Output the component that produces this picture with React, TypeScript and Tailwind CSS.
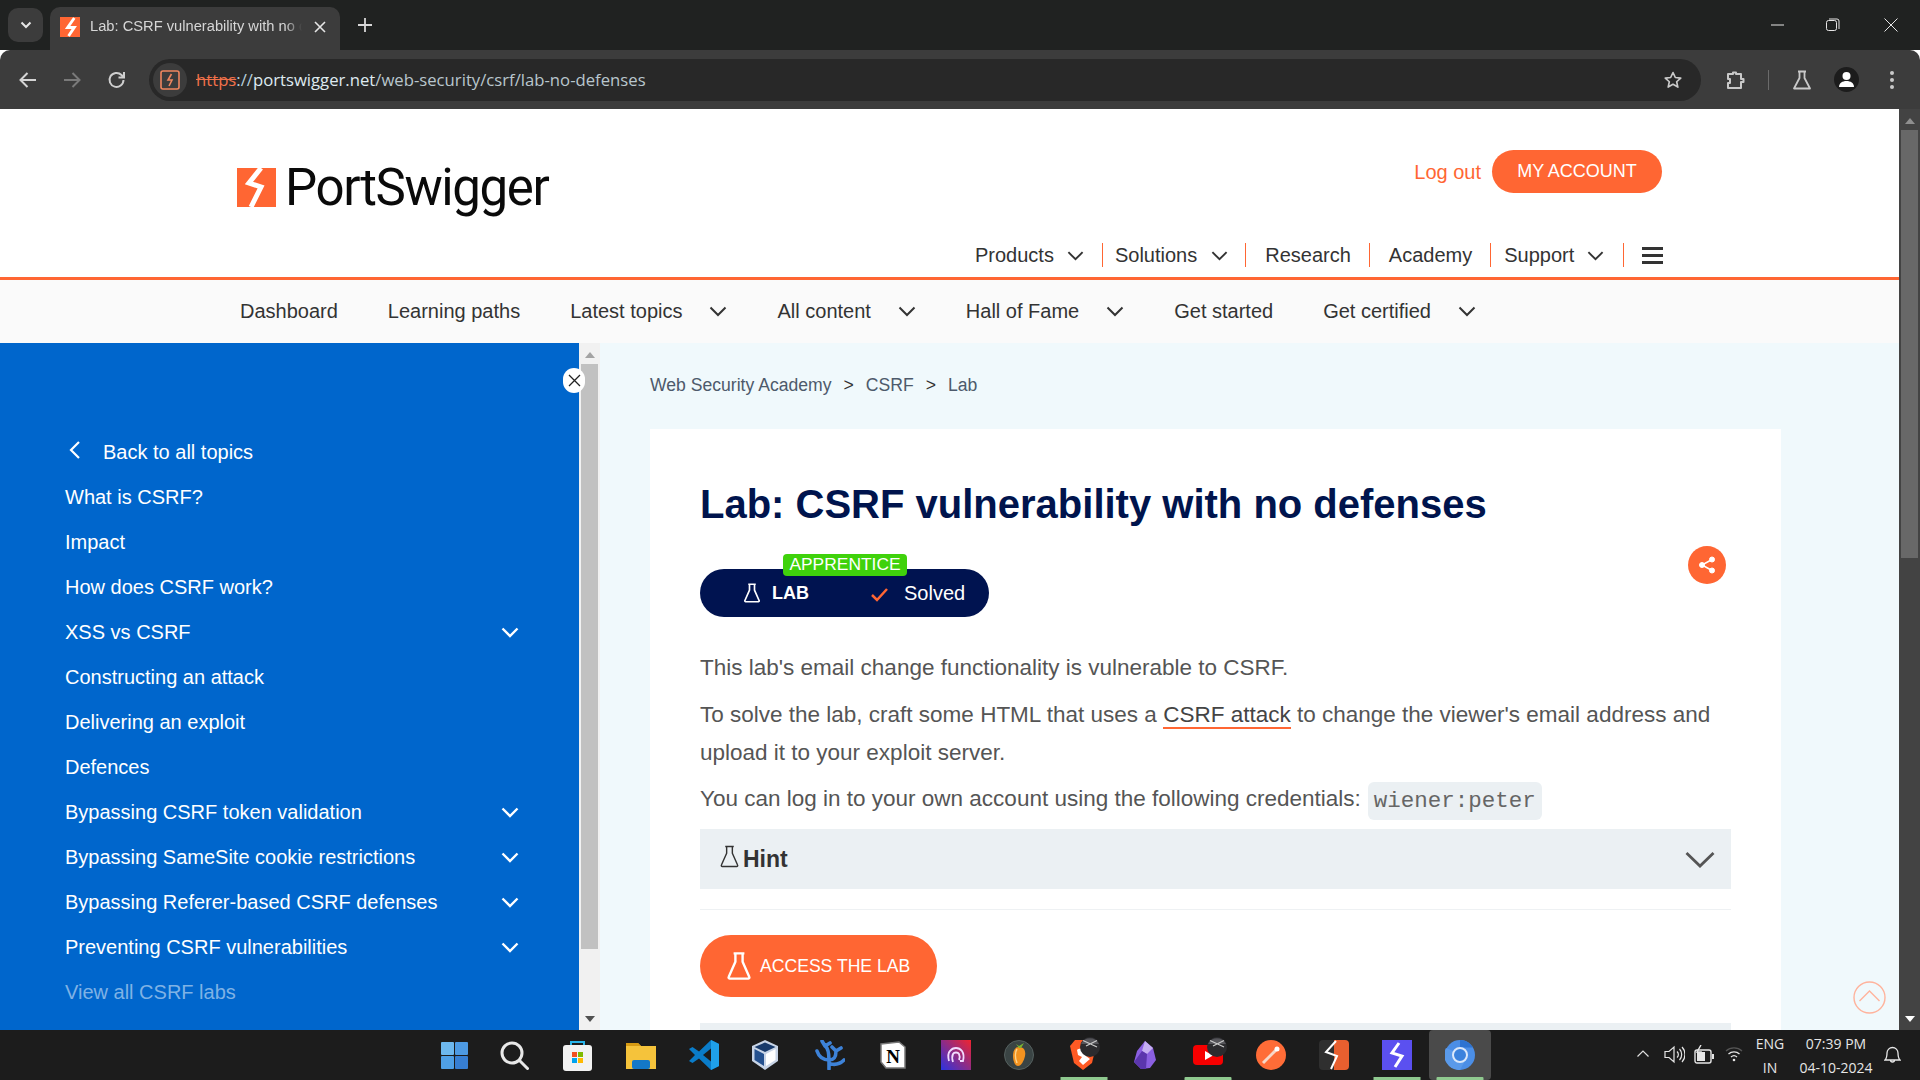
import React from "react";

const Chev = ({ c = "#333", s = 18, w = 2 }: { c?: string; s?: number; w?: number }) => (
  <svg width={s} height={s} viewBox="0 0 18 18" fill="none" stroke={c} strokeWidth={w}>
    <path d="M1.5 5.5 9 13l7.500-7.500" />
  </svg>
);

const Flask = ({ c = "#fff", w = 20, h = 24, sw = 2 }: { c?: string; w?: number; h?: number; sw?: number }) => (
  <svg width={w} height={h} viewBox="0 0 20 24" fill="none" stroke={c} strokeWidth={sw} strokeLinejoin="round">
    <path d="M5.500 1.500h9M7 1.500v7L1.500 21a1 1 0 0 0 1 1.500h15a1 1 0 0 0 1-1.500L13 8.500v-7" />
  </svg>
);

const Bolt = ({ c = "#fff" }: { c?: string }) => (
  <path d="M15 1 8 11h7l-6 9" fill="none" stroke={c} strokeWidth="3" />
);

const Sep = () => <span className="block w-px h-6 bg-[#ff6633]" />;

const NavItem = ({ label, chev, x }: { label: string; chev?: boolean; x: string }) => (
  <div className={`flex items-center ${x}`}>
    <span>{label}</span>
    {chev && <span className="ml-[27px]"><Chev s={18} w={2} /></span>}
  </div>
);

const topics: [string, boolean][] = [
  ["What is CSRF?", false],
  ["Impact", false],
  ["How does CSRF work?", false],
  ["XSS vs CSRF", true],
  ["Constructing an attack", false],
  ["Delivering an exploit", false],
  ["Defences", false],
  ["Bypassing CSRF token validation", true],
  ["Bypassing SameSite cookie restrictions", true],
  ["Bypassing Referer-based CSRF defenses", true],
  ["Preventing CSRF vulnerabilities", true],
];

const UI = '"Liberation Sans", Arial, sans-serif';

const Tab = () => (
  <div className="relative w-[290px] h-[43px] bg-[#3c3c3c] rounded-t-[10px] flex items-center pl-[10px] pb-[4px] ml-[7px] mt-[7px]">
    <svg width="20" height="20" viewBox="0 0 21 21" className="shrink-0">
      <rect width="21" height="21" fill="#ff6633" />
      <Bolt />
    </svg>
    <span className="ml-[10px] text-[14.700px] text-[#d6d6d6] w-[212px] overflow-hidden whitespace-nowrap" style={{ maskImage: "linear-gradient(to right,#000 92%,transparent)" }}>
      Lab: CSRF vulnerability with no defenses
    </span>
    <svg width="12" height="12" viewBox="0 0 12 12" stroke="#e5e5e5" strokeWidth="1.600" className="ml-[12px]">
      <path d="M1 1l10 10M11 1 1 11" />
    </svg>
  </div>
);

const Chrome = () => (
  <div className="shrink-0">
    <div className="h-[50px] bg-[#202221] flex items-start">
      <div className="w-[35px] h-[34px] mt-[8px] ml-[8px] rounded-[10px] bg-[#3c3c3c] flex items-center justify-center">
        <svg width="12" height="8" viewBox="0 0 12 8" fill="none" stroke="#e6e6e6" strokeWidth="2"><path d="M1.500 1.500 6 6l4.500-4.500" /></svg>
      </div>
      <Tab />
      <svg width="14" height="14" viewBox="0 0 14 14" stroke="#d8d8d8" strokeWidth="1.800" className="ml-[18px] mt-[18px]"><path d="M7 0v14M0 7h14" /></svg>
      <div className="flex-1" />
      <svg width="14" height="14" viewBox="0 0 14 14" stroke="#e6e6e6" strokeWidth="1" className="mt-[18px] mr-[41px]"><path d="M0 7h13" /></svg>
      <svg width="14" height="14" viewBox="0 0 14 14" fill="none" stroke="#e6e6e6" strokeWidth="1" className="mt-[18px] mr-[44px]">
        <rect x="0.500" y="2.500" width="10" height="10" rx="2" /><path d="M3 1h8a2 2 0 0 1 2 2v8" />
      </svg>
      <svg width="14" height="14" viewBox="0 0 14 14" stroke="#e6e6e6" strokeWidth="1" className="mt-[18px] mr-[22px]"><path d="M.5.500l13 13M13.500.500l-13 13" /></svg>
    </div>
    <div className="h-[59px] bg-[#3c3c3c] rounded-t-[10px] flex items-center">
      <svg width="20" height="18" viewBox="0 0 20 18" fill="none" stroke="#d4d4d4" strokeWidth="2" className="ml-[18px]"><path d="M18 9H3M9.500 2 2.500 9l7 7" /></svg>
      <svg width="20" height="18" viewBox="0 0 20 18" fill="none" stroke="#7a7a7a" strokeWidth="2" className="ml-[24px]"><path d="M2 9h15M10.500 2l7 7-7 7" /></svg>
      <svg width="20" height="20" viewBox="0 0 20 20" fill="none" stroke="#cfcfcf" strokeWidth="2" className="ml-[25px]"><path d="M16.500 10a7 7 0 1 1-2-5L17 7.500M17 2v5.500h-5.500" /></svg>
      <div className="ml-[22px] w-[1552px] h-[42px] rounded-full bg-[#282828] flex items-center relative">
        <div className="w-[34px] h-[34px] ml-[4px] rounded-full bg-[#3c3c3c] flex items-center justify-center">
          <svg width="20" height="20" viewBox="0 0 20 20" fill="none">
            <rect x="1" y="1" width="18" height="18" rx="2" stroke="#f0865f" strokeWidth="1.600" />
            <path d="M11.500 4 8 10h4l-3 6" stroke="#f0865f" strokeWidth="1.600" />
          </svg>
        </div>
        <span className="ml-[9px] mt-[1px] text-[16.700px]" style={{ fontFamily: '"Open Sans","Noto Sans",sans-serif' }}>
          <span className="text-[#f0714a] line-through">https</span>
          <span className="text-[#b9d0dc]">://</span>
          <span className="text-[#dfeaf0]">portswigger.net</span>
          <span className="text-[#b9c6cd]">/web-security/csrf/lab-no-defenses</span>
        </span>
        <svg width="20" height="20" viewBox="0 0 24 24" fill="none" stroke="#c9c9c9" strokeWidth="2" strokeLinejoin="round" className="absolute right-[18px] top-[11px]">
          <path d="m12 3 2.800 6 6.500.700-4.900 4.400 1.400 6.400L12 17.200l-5.800 3.300 1.400-6.400L2.700 9.700 9.200 9z" />
        </svg>
      </div>
      <svg width="20" height="20" viewBox="0 0 20 20" fill="none" stroke="#c9c9c9" strokeWidth="2" strokeLinejoin="round" className="ml-[25px]">
        <path d="M2 4h5V2.500h3V4h5v5h2.500v3H15v6H2v-5h2V9H2z" />
      </svg>
      <span className="w-px h-[20px] bg-[#6b6b6b] ml-[22px]" />
      <svg width="20" height="20" viewBox="0 0 20 20" fill="none" stroke="#c9c9c9" strokeWidth="1.800" strokeLinejoin="round" className="ml-[23px]">
        <path d="M6 1.500h8M7.500 1.500V8L2 18.500h16L12.500 8V1.500" />
      </svg>
      <div className="ml-[22px] w-[25px] h-[25px] rounded-full bg-[#1c1c1c] flex items-center justify-center">
        <svg width="17" height="17" viewBox="0 0 17 17" fill="#fff"><circle cx="8.500" cy="5" r="4" /><path d="M1 16c0-4 3.500-6 7.500-6s7.500 2 7.500 6z" /></svg>
      </div>
      <svg width="6" height="20" viewBox="0 0 6 20" fill="#c9c9c9" className="ml-[30px]"><circle cx="3" cy="3" r="2" /><circle cx="3" cy="10" r="2" /><circle cx="3" cy="17" r="2" /></svg>
    </div>
  </div>
);

const Header = () => (
  <div className="h-[171px] bg-white border-b-[3px] border-[#ff6633] shrink-0 flex flex-col relative">
    <div className="flex justify-between pl-[237px] pr-[237px] pt-[38px] h-[134px]">
      <div className="flex items-center h-[60px] mt-[9px]">
        <svg width="39" height="39" viewBox="0 0 39 39" className="mt-[3px]">
          <rect width="39" height="39" fill="#ff6633" />
          <path d="M24 0 12 15l12 4-10 20" fill="none" stroke="#fff" strokeWidth="5" />
        </svg>
        <span className="ml-[9px] mt-[3px] text-[51px] tracking-[-1.400px] text-[#0a0a0a] leading-none" style={{ fontFamily: 'Roboto,sans-serif' }}>PortSwigger</span>
      </div>
      <div className="flex items-start mt-[3px]">
        <span className="text-[20px] text-[#ff6633] mt-[7px]">Log out</span>
        <span className="ml-[11px] w-[170px] h-[43px] rounded-full bg-[#ff6633] text-white text-[18px] flex items-center justify-center">MY ACCOUNT</span>
      </div>
    </div>
    <div className="flex items-center h-[24px] pl-[975px] text-[20px] text-[#333] whitespace-nowrap">
      <span>Products</span>
      <span className="ml-[13px]"><Chev s={17} /></span>
      <span className="ml-[18px]"><Sep /></span>
      <span className="ml-[12px]">Solutions</span>
      <span className="ml-[14px]"><Chev s={17} /></span>
      <span className="ml-[17px]"><Sep /></span>
      <span className="ml-[19px]">Research</span>
      <span className="ml-[18px]"><Sep /></span>
      <span className="ml-[19px]">Academy</span>
      <span className="ml-[18px]"><Sep /></span>
      <span className="ml-[13px]">Support</span>
      <span className="ml-[13px]"><Chev s={17} /></span>
      <span className="ml-[19px]"><Sep /></span>
      <span className="ml-[18px] flex flex-col gap-[4px] w-[21px]">
        <span className="h-[3px] bg-[#333]" /><span className="h-[3px] bg-[#333]" /><span className="h-[3px] bg-[#333]" />
      </span>
    </div>
  </div>
);

const SubNav = () => (
  <div className="h-[63px] bg-[#fafafa] shrink-0 flex items-center pl-[240px] pb-[2px] text-[20px] text-[#333] whitespace-nowrap">
    <NavItem label="Dashboard" x="" />
    <NavItem label="Learning paths" x="ml-[50px]" />
    <NavItem label="Latest topics" chev x="ml-[50px]" />
    <NavItem label="All content" chev x="ml-[50px]" />
    <NavItem label="Hall of Fame" chev x="ml-[50px]" />
    <NavItem label="Get started" x="ml-[50px]" />
    <NavItem label="Get certified" chev x="ml-[50px]" />
  </div>
);

const Sidebar = () => (
  <div className="w-[600px] shrink-0 flex relative">
    <div className="w-[579px] bg-[#0066cc] text-white text-[20px] pt-[86px] pl-[65px] pr-[60px]">
      <div className="flex items-center h-[45px]">
        <svg width="14" height="20" viewBox="0 0 14 20" fill="none" stroke="#fff" strokeWidth="2.200" className="ml-[3px] -mt-[4px]"><path d="M11 2 3 10l8 8" /></svg>
        <span className="ml-[21px]">Back to all topics</span>
      </div>
      {topics.map(([t, c]) => (
        <div key={t} className="flex items-center justify-between h-[45px]">
          <span>{t}</span>
          {c && <Chev c="#fff" s={18} w={2.400} />}
        </div>
      ))}
      <div className="h-[45px] flex items-center text-[#7fb2e5]">View all CSRF labs</div>
    </div>
    <div className="w-[21px] bg-[#f1f1f1] flex flex-col items-center">
      <svg width="10" height="6" viewBox="0 0 10 6" fill="#a3a3a3" className="mt-[9px]"><path d="M5 0l5 6H0z" /></svg>
      <div className="w-[17px] h-[585px] bg-[#c1c1c1] mt-[6px]" />
      <div className="flex-1" />
      <svg width="10" height="6" viewBox="0 0 10 6" fill="#505050" className="mb-[8px]"><path d="M5 6 10 0H0z" /></svg>
    </div>
    <div className="absolute left-[563px] top-[25px] w-[22px] h-[25px] rounded-full bg-white flex items-center justify-center">
      <svg width="13" height="13" viewBox="0 0 13 13" stroke="#222" strokeWidth="1.300"><path d="M1 1l11 11M12 1 1 12" /></svg>
    </div>
  </div>
);

const Main = () => (
  <div className="flex-1 bg-[#f0f9fc] relative overflow-hidden pl-[50px]">
    <div className="text-[17.600px] text-[#4d5a6b] h-[86px] pt-[30px] leading-[24px] whitespace-nowrap">
      Web Security Academy
      <span className="mx-[12px] text-[#333]">&gt;</span>CSRF
      <span className="mx-[12px] text-[#333]">&gt;</span>Lab
    </div>
    <div className="w-[1131px] h-[700px] bg-white px-[50px]">
      <h1 className="text-[40px] font-bold text-[#00144d] pt-[50px] leading-[50px] whitespace-nowrap">Lab: CSRF vulnerability with no defenses</h1>
      <div className="relative h-[48px] w-[289px] mt-[40px] rounded-full bg-[#001350] text-white flex items-center">
        <div className="absolute left-[83px] -top-[15px] w-[124px] h-[22px] rounded-[4px] bg-[#3fd20b] text-[17.400px] flex items-center justify-center leading-none">APPRENTICE</div>
        <span className="ml-[43px]"><Flask w={18} h={20} /></span>
        <span className="ml-[11px] font-bold text-[18px]">LAB</span>
        <svg width="18" height="14" viewBox="0 0 18 14" fill="none" stroke="#ff6633" strokeWidth="2.500" className="ml-[62px] mt-[3px]"><path d="M1 7l5 5 10-11" /></svg>
        <span className="ml-[15px] text-[20px] -mt-[1px]">Solved</span>
      </div>
      <div className="absolute left-[1088px] top-[203px] w-[38px] h-[38px] rounded-full bg-[#ff6633] flex items-center justify-center">
        <svg width="18" height="18" viewBox="0 0 18 18" fill="#fff" stroke="#fff"><circle cx="14" cy="3.500" r="2.500" /><circle cx="14" cy="14.500" r="2.500" /><circle cx="4" cy="9" r="2.500" /><path d="M14 3.500 4 9l10 5.500" fill="none" strokeWidth="1.500" /></svg>
      </div>
      <div className="text-[22.500px] text-[#555] leading-[38px]">
        <p className="mt-[32px]">This lab's email change functionality is vulnerable to CSRF.</p>
        <p className="mt-[9px]">
          To solve the lab, craft some HTML that uses a{" "}
          <span className="border-b-[2px] border-[#ff6633] text-[#444]">CSRF attack</span> to change the viewer's email address and upload it to your exploit server.
        </p>
        <p className="mt-[8px] whitespace-nowrap flex items-center">
          You can log in to your own account using the following credentials:
          <code className="ml-[7px] translate-y-[2px] px-[6px] h-[38px] rounded-[6px] bg-[#ebf0f3] text-[22.500px] text-[#666] flex items-center" style={{ fontFamily: '"Liberation Mono",monospace' }}>wiener:peter</code>
        </p>
      </div>
      <div className="h-[60px] mt-[11px] bg-[#ebf0f3] flex items-center pl-[20px] pr-[16px]">
        <span className="-mt-[6px]"><Flask c="#333" w={19} h={23} sw={1.500} /></span>
        <span className="ml-[4px] text-[23px] font-bold text-[#333]">Hint</span>
        <span className="ml-auto mt-[2px]"><svg width="30" height="18" viewBox="0 0 30 18" fill="none" stroke="#555" strokeWidth="2.800"><path d="M1.500 2 15 15 28.500 2" /></svg></span>
      </div>
      <div className="h-px bg-[#eef1f3] mt-[20px]" />
      <div className="mt-[25px] w-[237px] h-[62px] rounded-full bg-[#ff6633] text-white flex items-center pl-[27px]">
        <Flask w={24} h={30} />
        <span className="ml-[9px] text-[17.600px]">ACCESS THE LAB</span>
      </div>
      <div className="h-[40px] bg-[#ebf0f3] mt-[26px]" />
    </div>
    <div className="absolute right-[13px] top-[638px]">
      <svg width="33" height="33" viewBox="0 0 33 33" fill="none" stroke="#ffb39c" strokeWidth="1.400"><circle cx="16.500" cy="16.500" r="15.500" /><path d="M6.500 20 16.500 10l10 10" /></svg>
    </div>
  </div>
);

const PageScroll = () => (
  <div className="w-[21px] bg-[#434343] shrink-0 flex flex-col items-center">
    <svg width="10" height="6" viewBox="0 0 10 6" fill="#8f8f8f" className="mt-[9px]"><path d="M5 0l5 6H0z" /></svg>
    <div className="w-[17px] h-[428px] bg-[#686868] mt-[6px]" />
    <div className="flex-1" />
    <svg width="10" height="6" viewBox="0 0 10 6" fill="#fff" className="mb-[8px]"><path d="M5 6 10 0H0z" /></svg>
  </div>
);

const Box = ({ w, ml, children, u, bg }: { w: number; ml: number; children: React.ReactNode; u?: boolean; bg?: boolean }) => (
  <div className={`relative h-[50px] flex items-center justify-center ${bg ? "bg-[#4a4a4a] rounded-[4px]" : ""}`} style={{ width: w, marginLeft: ml }}>
    {children}
    {u && <span className="absolute bottom-0 left-1/2 -translate-x-1/2 w-[47px] h-[3px] bg-[#8fc98f] rounded-t-[1px]" />}
  </div>
);

const Overlay = ({ x }: { x: string }) => (
  <svg width="20" height="20" viewBox="0 0 20 20" className={`absolute top-[7px] ${x}`}>
    <circle cx="10" cy="10" r="10" fill="#2b2b2e" />
    <path d="M1 7a10 10 0 0 1 18 0z" fill="#55555a" />
    <path d="M3 3.500 17 10M17 3.500 6 9" stroke="#c9c9c9" strokeWidth="1.200" />
  </svg>
);

const Taskbar = () => (
  <div className="h-[50px] bg-[#1c1c1c] shrink-0 flex items-center relative text-[#e6e6e6]">
    <Box w={27} ml={441}>
      <svg width="27" height="27" viewBox="0 0 27 27">
        <rect width="13" height="13" fill="#6db8ee" rx="1" /><rect x="14" width="13" height="13" fill="#4d9ae3" rx="1" />
        <rect y="14" width="13" height="13" fill="#4fa0e6" rx="1" /><rect x="14" y="14" width="13" height="13" fill="#377fd3" rx="1" />
      </svg>
    </Box>
    <Box w={29} ml={32}>
      <svg width="29" height="29" viewBox="0 0 29 29" fill="none" stroke="#e8e8e8" strokeWidth="3"><circle cx="12" cy="12" r="10" /><path d="m19.500 19.500 8 8" strokeLinecap="round" /></svg>
    </Box>
    <Box w={29} ml={34}>
      <svg width="29" height="31" viewBox="0 0 29 31">
        <path d="M8 6V2h13v4" fill="none" stroke="#28b4ea" strokeWidth="2" />
        <rect y="5" width="29" height="26" rx="3" fill="#f2f2f2" />
        <rect x="9" y="12" width="5" height="5" fill="#f25022" /><rect x="15" y="12" width="5" height="5" fill="#7fba00" />
        <rect x="9" y="18" width="5" height="5" fill="#00a4ef" /><rect x="15" y="18" width="5" height="5" fill="#ffb900" />
      </svg>
    </Box>
    <Box w={30} ml={34}>
      <svg width="30" height="28" viewBox="0 0 30 28">
        <path d="M0 2h12l3 3h15v23H0z" fill="#f5c33b" /><path d="M0 2h12l3 3H0z" fill="#d69a13" />
        <rect x="6" y="19" width="18" height="9" rx="2" fill="#1478c8" />
      </svg>
    </Box>
    <Box w={30} ml={33}>
      <svg width="30" height="30" viewBox="0 0 30 30">
        <path d="M22 0 30 4v22l-8 4L10 18.500 3.500 23 0 21l6-6-6-6 3.500-2L10 11.500z" fill="#0a7cc9" />
        <path d="M22 0 30 4v22l-8 4z" fill="#1fa0ea" /><path d="M22 8.500 14 15l8 6.500z" fill="#1c1c1c" />
      </svg>
    </Box>
    <Box w={26} ml={33}>
      <svg width="26" height="30" viewBox="0 0 26 30">
        <path d="M13 0 26 6v15l-13 9L0 21V6z" fill="#c8d4e6" /><path d="M2.500 7 13 2.500 23.500 7 13 12z" fill="#183a6b" />
        <path d="M2.500 9 12 14v12l-9.500-6z" fill="#25518f" /><path d="M23.500 9 14 14v12l9.500-6z" fill="#fff" />
      </svg>
    </Box>
    <Box w={30} ml={37}>
      <svg width="30" height="30" viewBox="0 0 30 30" fill="none" stroke="#3d82d8" strokeWidth="3.600" strokeLinecap="round">
        <path d="M14 29V20M14 20C8 20 4 17 2 11M14 20c0-6-1-12-4-14M10 6 7 1M10 6l5-3M14 20c6 0 7-4 7-9M21 11l5-3M21 11l-4-4M16 24c5 1 10-1 13-4" />
      </svg>
    </Box>
    <Box w={26} ml={35}>
      <svg width="26" height="28" viewBox="0 0 26 28">
        <path d="M1 3 19 1l6 5v21L6 27l-5-6z" fill="#fff" stroke="#777" strokeWidth="1.500" />
        <text x="13" y="22" textAnchor="middle" fontSize="19" fontWeight="bold" fontFamily="Liberation Serif" fill="#000">N</text>
      </svg>
    </Box>
    <Box w={30} ml={35}>
      <svg width="30" height="30" viewBox="0 0 30 30">
        <defs><linearGradient id="pr" x1="0" y1="1" x2="1" y2="0"><stop offset="0" stopColor="#2b33e0" /><stop offset="1" stopColor="#f0242e" /></linearGradient></defs>
        <rect width="30" height="30" fill="url(#pr)" />
        <path d="M8 21c-1-4-1-8 1-10 3-4 9-4 12 0 2 3 2 6 1 10h-3M12 22c-1-3-1-6 0-8 1-2 5-2 6 0 1 2 1 4 0 6" fill="none" stroke="#f2dcff" strokeWidth="1.800" />
      </svg>
    </Box>
    <Box w={30} ml={33}>
      <svg width="30" height="30" viewBox="0 0 30 30">
        <circle cx="15" cy="15" r="14.500" fill="#3a4444" stroke="#55605f" strokeWidth="1" />
        <path d="M15 7c5 0 7 4 6 9-1 5-4 10-7 10s-5-5-5-10c0-5 2-9 6-9z" fill="#f39320" />
        <path d="M13 9c-2 3-2 9 0 14" fill="none" stroke="#ffd58a" strokeWidth="1.500" />
        <path d="M15 8l-3-4 3 2 5-3-3 5z" fill="#7bb52f" />
      </svg>
    </Box>
    <Box w={30} ml={35}>
      <svg width="30" height="32" viewBox="0 0 30 32">
        <path d="M6 1h16l5 6-4 17-9 7-9-7L1 7z" fill="#ff5a24" />
        <path d="M8 11c4-3 5 1 8-1l3 2-2 5 4 3-7 6-4-4 3-4-4-2z" fill="#fff" />
      </svg>
      <Overlay x="left-[11px]" />
      <span className="absolute bottom-0 left-1/2 -translate-x-1/2 w-[47px] h-[3px] bg-[#8fc98f]" />
    </Box>
    <Box w={22} ml={35}>
      <svg width="22" height="28" viewBox="0 0 22 28">
        <path d="M11 0 19 7l3 12-6 8-9 1-7-7 3-11z" fill="#8a5fe0" /><path d="M11 0 19 7l-6 6-5-3z" fill="#c5aef2" /><path d="M0 21l8-11 5 3-1 15H7z" fill="#5b36ad" />
      </svg>
    </Box>
    <Box w={30} ml={37} u>
      <svg width="30" height="20" viewBox="0 0 30 20">
        <rect width="30" height="20" rx="4" fill="#f70000" /><path d="M12 6v9l8-4.500z" fill="#fff" />
      </svg>
      <Overlay x="left-[14px]" />
    </Box>
    <Box w={30} ml={33}>
      <svg width="30" height="30" viewBox="0 0 30 30">
        <circle cx="15" cy="15" r="15" fill="#ff6c37" />
        <path d="M7 23 20 10" stroke="#f7d7c8" strokeWidth="3" /><circle cx="21" cy="9" r="2.500" fill="#fff" />
      </svg>
    </Box>
    <Box w={30} ml={33}>
      <svg width="30" height="30" viewBox="0 0 30 30">
        <path d="M4 0h12v30H4a4 4 0 0 1-4-4V4a4 4 0 0 1 4-4z" fill="#2f2f2f" />
        <path d="M15 0h11a4 4 0 0 1 4 4v22a4 4 0 0 1-4 4H15z" fill="#e85f2f" />
        <path d="M17 1 7 12l11 4-6 13" fill="none" stroke="#fff" strokeWidth="2" />
      </svg>
    </Box>
    <Box w={30} ml={33}>
      <svg width="30" height="30" viewBox="0 0 30 30">
        <rect width="30" height="30" fill="#5b50f0" /><path d="M17 3 10 13l10 3-7 11" fill="none" stroke="#fff" strokeWidth="3" />
      </svg>
      <span className="absolute bottom-0 left-1/2 -translate-x-1/2 w-[47px] h-[3px] bg-[#8fc98f]" />
    </Box>
    <Box w={62} ml={17} bg u>
      <svg width="30" height="30" viewBox="0 0 30 30">
        <circle cx="15" cy="15" r="15" fill="#4b8ee6" />
        <path d="M15 0a15 15 0 0 1 13 7.500H15z" fill="#2d73d1" />
        <path d="M1 8a15 15 0 0 0 14 22l7-13z" fill="#5a9aea" />
        <circle cx="15" cy="15" r="7" fill="#3b82dd" stroke="#dbe8fa" strokeWidth="2" />
      </svg>
    </Box>
    <div className="absolute left-[1637px] top-[20px]">
      <svg width="12" height="8" viewBox="0 0 12 8" fill="none" stroke="#e0e0e0" strokeWidth="1.200"><path d="M.5 6.500 6 1l5.500 5.500" /></svg>
    </div>
    <div className="absolute left-[1664px] top-[15px]">
      <svg width="21" height="19" viewBox="0 0 21 19" fill="none" stroke="#e6e6e6" strokeWidth="1.200"><path d="M1 6.500h4l5-4.500v15l-5-4.500H1zM13 6.500a4 4 0 0 1 0 6M15.500 4a8 8 0 0 1 0 11M18 2a11 11 0 0 1 0 15" /></svg>
    </div>
    <div className="absolute left-[1694px] top-[15px]">
      <svg width="21" height="19" viewBox="0 0 21 19" fill="none"><rect x="1" y="5" width="16" height="13" rx="2" stroke="#e6e6e6" strokeWidth="1.400" /><rect x="3" y="7" width="8" height="9" fill="#e6e6e6" /><path d="M18 9v5h2V9z" fill="#e6e6e6" /><path d="M7 0 3 7h4l-2 5" stroke="#e6e6e6" strokeWidth="1.400" /></svg>
    </div>
    <div className="absolute left-[1725px] top-[16px]">
      <svg width="18" height="16" viewBox="0 0 18 16" fill="none" strokeWidth="1.300"><path d="M1 5a12 12 0 0 1 16 0" stroke="#555" /><path d="M3.500 8a8 8 0 0 1 11 0M6 11a4.500 4.500 0 0 1 6 0" stroke="#e6e6e6" /><circle cx="9" cy="14" r="1.300" fill="#e6e6e6" /></svg>
    </div>
    <div className="absolute left-[1750px] top-[2px] w-[40px] text-center text-[14px] leading-[24px]" style={{ fontFamily: '"Open Sans",sans-serif' }}>
      <div>ENG</div><div>IN</div>
    </div>
    <div className="absolute left-[1790px] top-[2px] w-[92px] text-center text-[14px] leading-[24px]" style={{ fontFamily: '"Open Sans",sans-serif' }}>
      <div>07:39 PM</div><div>04-10-2024</div>
    </div>
    <div className="absolute left-[1884px] top-[15px]">
      <svg width="17" height="20" viewBox="0 0 17 20" fill="none" stroke="#e6e6e6" strokeWidth="1.300"><path d="M1 15c2-2 2-4 2-7a5.500 5.500 0 0 1 11 0c0 3 0 5 2 7zM6.500 15a2 2 0 0 0 4 0" /></svg>
    </div>
  </div>
);

export default function App() {
  return (
    <div className="w-[1920px] h-[1080px] flex flex-col overflow-hidden" style={{ fontFamily: UI }}>
      <Chrome />
      <div className="flex-1 flex min-h-0">
        <div className="w-[1899px] flex flex-col min-h-0">
          <Header />
          <SubNav />
          <div className="flex-1 flex min-h-0">
            <Sidebar />
            <Main />
          </div>
        </div>
        <PageScroll />
      </div>
      <Taskbar />
    </div>
  );
}
